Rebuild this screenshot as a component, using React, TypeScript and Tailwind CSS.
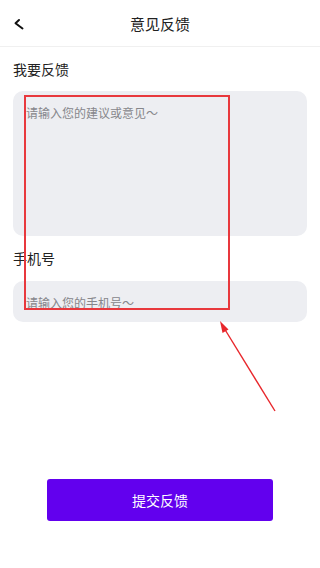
import React from "react";

const cjk = { fontFamily: '"Noto Sans CJK SC", "Noto Sans", sans-serif' };

export default function App() {
  return (
    <div className="relative w-[320px] h-[568px] bg-white text-[#222]" style={cjk}>
      {/* Header */}
      <div className="relative flex h-[47px] items-center justify-center border-b border-[#f0f0f0]">
        <button className="absolute left-[13px] top-[18px] h-[12px] w-[12px]">
          <svg viewBox="0 0 12 12" className="h-[12px] w-[12px]">
            <path d="M6 2 L2.5 5.2 L9.5 10.5" fill="none" stroke="#111" strokeWidth="2" strokeLinecap="round" strokeLinejoin="round" />
          </svg>
        </button>
        <p className="pt-[2px] text-[15px] leading-[20px] text-[#222]">意见反馈</p>
      </div>

      {/* Form */}
      <div className="flex flex-col px-[13px]">
        <p className="mt-[12px] text-[14px] leading-[20px] text-[#222]">我要反馈</p>
        <div className="mt-[12px] h-[145px] rounded-[10px] bg-[#edeef2] px-[13px] py-[13px]">
          <textarea
            placeholder="请输入您的建议或意见～"
            className="h-full w-full resize-none bg-transparent text-[12px] leading-[18px] text-[#333] placeholder:text-[#86868b] outline-none"
            style={cjk}
          />
        </div>
        <p className="mt-[12px] text-[14px] leading-[20px] text-[#222]">手机号</p>
        <div className="mt-[13px] flex h-[41px] items-center rounded-[10px] bg-[#edeef2] px-[13px]">
          <input
            placeholder="请输入您的手机号～"
            className="w-full bg-transparent pt-[2px] text-[12px] leading-[18px] text-[#333] placeholder:text-[#86868b] outline-none"
            style={cjk}
          />
        </div>
      </div>

      {/* Submit */}
      <div className="mt-[157px] flex justify-center">
        <button className="h-[42px] w-[226px] rounded-[3px] bg-[#6200ee] text-[14px] text-white">提交反馈</button>
      </div>

      {/* Annotation overlay */}
      <div className="pointer-events-none absolute left-[24px] top-[95px] h-[215px] w-[206px] border-2 border-[#e8383d]" />
      <svg className="pointer-events-none absolute left-0 top-0" width="320" height="568">
        <line x1="275" y1="411" x2="224" y2="328" stroke="#e8262b" strokeWidth="1.4" />
        <polygon points="220,321 222.5,333 228.5,329.5" fill="#e8262b" />
      </svg>
    </div>
  );
}
